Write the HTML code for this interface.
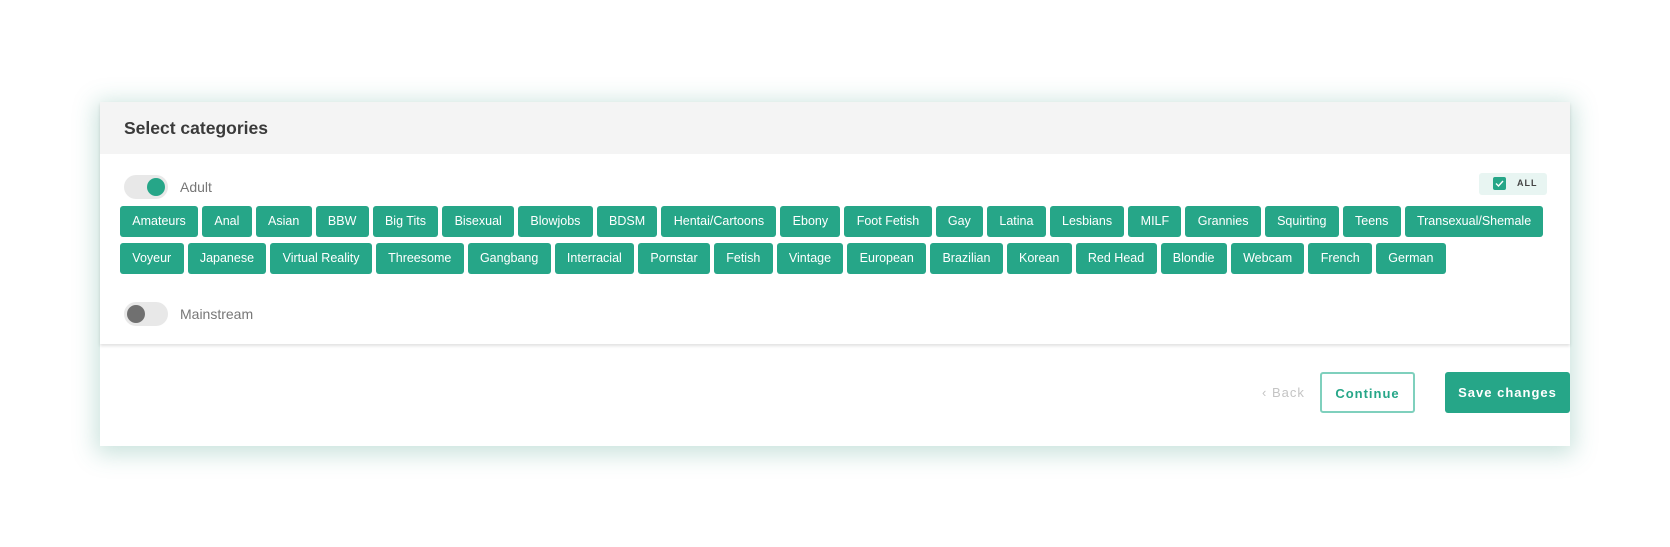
<!DOCTYPE html>
<html><head><style>
*{box-sizing:border-box;margin:0;padding:0}
body{width:1670px;height:547px;background:#fff;font-family:"Liberation Sans",sans-serif;position:relative;overflow:hidden}
.outer{position:absolute;left:100px;top:102px;width:1470px;height:344px;background:#fff;box-shadow:0 4px 22px 4px rgba(60,150,130,.28)}
.card{position:absolute;left:0;top:0;width:1470px;height:242px;background:#fff;box-shadow:0 2px 3px rgba(0,0,0,.12)}
.hdr{height:52px;background:#f4f4f4;padding-left:24px;line-height:52px;font-size:17.5px;font-weight:bold;color:#3a3a3a}
.tog{position:absolute;left:24px;width:44px;height:24px;border-radius:12px;background:#e8e8e8}
.tog i{position:absolute;top:3px;width:18px;height:18px;border-radius:50%}
.lbl{position:absolute;left:80px;font-size:14px;color:#777}
.tags{position:absolute;left:20px;top:104px;width:1440px;display:flex;flex-wrap:wrap;gap:6px 4px}
.tags span{background:#26a688;color:#fff;font-size:12.5px;height:31px;line-height:31px;padding:0 12.3px;border-radius:3px}
.all{position:absolute;left:1379px;top:71px;width:68px;height:22px;background:#e8f5f2;border-radius:3px}
.all b{position:absolute;left:14px;top:4px;width:13px;height:13px;background:#26a688;border-radius:2px}
.all em{position:absolute;left:38px;top:5px;font-size:9px;font-weight:bold;font-style:normal;color:#444;letter-spacing:1px}
.btn{position:absolute;top:270px;height:41px;font-size:13px;font-weight:bold;letter-spacing:1px;text-align:center;line-height:39px;border-radius:3px}
</style></head><body>
<div class="outer">
<div class="card">
<div class="hdr">Select categories</div>
<div class="tog" style="top:73px"><i style="left:23px;background:#26a688"></i></div>
<div class="lbl" style="top:77px">Adult</div>
<div class="all"><b><svg width="13" height="13" viewBox="0 0 13 13"><path d="M3 6.5l2.5 2.5 4.5-5" stroke="#fff" stroke-width="1.4" fill="none"/></svg></b><em>ALL</em></div>
<div class="tags">
<span>Amateurs</span><span>Anal</span><span>Asian</span><span>BBW</span><span>Big Tits</span><span>Bisexual</span><span>Blowjobs</span><span>BDSM</span><span>Hentai/Cartoons</span><span>Ebony</span><span>Foot Fetish</span><span>Gay</span><span>Latina</span><span>Lesbians</span><span>MILF</span><span>Grannies</span><span>Squirting</span><span>Teens</span><span>Transexual/Shemale</span>
<span>Voyeur</span><span>Japanese</span><span>Virtual Reality</span><span>Threesome</span><span>Gangbang</span><span>Interracial</span><span>Pornstar</span><span>Fetish</span><span>Vintage</span><span>European</span><span>Brazilian</span><span>Korean</span><span>Red Head</span><span>Blondie</span><span>Webcam</span><span>French</span><span>German</span>
</div>
<div class="tog" style="top:200px"><i style="left:3px;background:#707070"></i></div>
<div class="lbl" style="top:204px">Mainstream</div>
</div>
<div style="position:absolute;left:1162px;top:283px;font-size:13px;color:#c4c4c4;letter-spacing:1px">‹ Back</div>
<div class="btn" style="left:1220px;width:95px;border:2px solid #7fd0bd;color:#26a688">Continue</div>
<div class="btn" style="left:1345px;width:125px;background:#26a688;color:#fff;line-height:41px">Save changes</div>
</div>
</body></html>
